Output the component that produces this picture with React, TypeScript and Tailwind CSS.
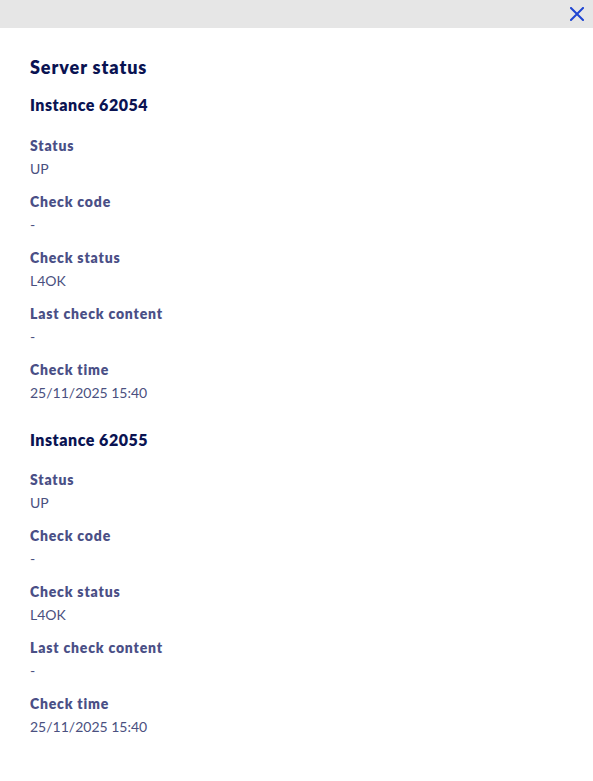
import React from "react";

type Item = { label: string; value: string };

const instances: { name: string; items: Item[] }[] = [
  {
    name: "Instance 62054",
    items: [
      { label: "Status", value: "UP" },
      { label: "Check code", value: "-" },
      { label: "Check status", value: "L4OK" },
      { label: "Last check content", value: "-" },
      { label: "Check time", value: "25/11/2025 15:40" },
    ],
  },
  {
    name: "Instance 62055",
    items: [
      { label: "Status", value: "UP" },
      { label: "Check code", value: "-" },
      { label: "Check status", value: "L4OK" },
      { label: "Last check content", value: "-" },
      { label: "Check time", value: "25/11/2025 15:40" },
    ],
  },
];

export default function App() {
  return (
    <div
      className="w-[593px] h-[781px] bg-white flex flex-col"
      style={{ fontFamily: "Lato, 'Open Sans', sans-serif" }}
    >
      <div className="h-[28px] bg-[#e6e6e6] flex items-center justify-end pr-[9px]">
        <button className="w-[14px] h-[14px] flex items-center justify-center">
          <svg width="14" height="14" viewBox="0 0 14 14" fill="none">
            <path d="M1 1L13 13M13 1L1 13" stroke="#1f45d2" strokeWidth="2" strokeLinecap="square" />
          </svg>
        </button>
      </div>
      <div className="px-[30px] pt-[27px] flex flex-col">
        <h1 className="text-[18px] leading-[24px] font-extrabold tracking-[0.9px] text-[#0a1352]">Server status</h1>
        {instances.map((inst, i) => (
          <div key={inst.name} className={i === 0 ? "mt-[16px]" : "mt-[27px]"}>
            <h2 className="text-[16px] leading-[20px] font-extrabold tracking-[0.5px] text-[#0a1352]">{inst.name}</h2>
            <div className={(i === 0 ? "mt-[21px]" : "mt-[20px]") + " flex flex-col gap-[13px]"}>
              {inst.items.map((it) => (
                <div key={it.label} className="flex flex-col">
                  <div className="text-[14px] leading-[20px] font-extrabold tracking-[0.8px] text-[#4a4f86]">{it.label}</div>
                  <div className="mt-[3px] text-[14px] leading-[20px] text-[#4a5080]">{it.value}</div>
                </div>
              ))}
            </div>
          </div>
        ))}
      </div>
    </div>
  );
}
